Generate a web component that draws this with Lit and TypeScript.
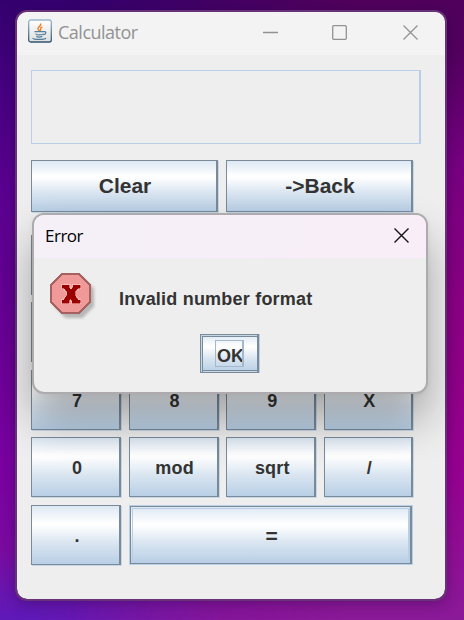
import { LitElement, html, css, svg } from "lit";
import { customElement, property } from "lit/decorators.js";
import { classMap } from "lit/directives/class-map.js";

const closeIcon = svg`<path d="M0.5 0.5L14.5 14.5M14.5 0.5L0.5 14.5" />`;

@customElement("metal-button")
class MetalButton extends LitElement {
  @property() label = "";
  @property() kind = "";

  static styles = css`
    :host { display: block; min-width: 0; }
    button {
      box-sizing: border-box;
      display: flex;
      align-items: center;
      justify-content: center;
      width: 100%;
      height: 100%;
      margin: 0;
      padding: 2px 0 0 3px;
      border: solid #7a8a99;
      border-width: 1px 2px 1px 1px;
      border-radius: 0;
      background: linear-gradient(#dde8f3 0%, #ffffff 30%, #ffffff 33%, #dbe6f1 62%, #b8cfe5 100%);
      box-shadow: 1px 1px 0 #c6d7e8;
      color: #333;
      font: bold 18px/20px "Liberation Sans", Arial, sans-serif;
      letter-spacing: .2px;
    }
    .large { padding: 0 0 0 2px; font-size: 21px; letter-spacing: 0; }
    .primary {
      position: relative;
      font-size: 21px;
      box-shadow: none;
      outline: 1px solid #b8cfe5;
      width: calc(100% - 2px);
      height: calc(100% - 2px);
      margin: 1px 0 0 1px;
    }
    .primary::after {
      content: "";
      position: absolute;
      inset: 1px 0 1px 1px;
      border: solid #b8cfe5;
      border-width: 1px 2px 1px 1px;
    }
    .ok {
      position: relative;
      padding: 5px 0 0 3px;
      letter-spacing: 0;
      box-shadow: inset 1px 1px 0 #c6d7e8, inset 2px 2px 0 #7a8a99, inset 0 -1px 0 #c6d7e8, inset 0 -2px 0 #7a8a99, 1px 0 0 #b8cfe5;
    }
    .ok::after {
      content: "";
      position: absolute;
      inset: 5px 13px 5px 14px;
      border: solid #a3b8cc;
      border-width: 1px 2px 1px 1px;
    }
  `;

  render() {
    return html`<button class=${classMap({ large: this.kind === "large", primary: this.kind === "primary", ok: this.kind === "ok" })}>${this.label}</button>`;
  }
}

@customElement("app-root")
class AppRoot extends LitElement {
  static styles = css`
    :host {
      display: flow-root;
      position: relative;
      width: 464px;
      height: 620px;
      overflow: hidden;
      font-family: "Open Sans", "Noto Sans", sans-serif;
      background:
        radial-gradient(ellipse 210px 75px at 10px 625px, rgba(78, 28, 198, .7), transparent),
        radial-gradient(ellipse 200px 60px at 464px 620px, rgba(130, 40, 165, .8), transparent),
        linear-gradient(90deg, transparent 40%, #8d008c 100%) 0 60px / 100% 560px no-repeat,
        linear-gradient(#34006e, #5a0090 30%, #7a00a0 75%, #7a14a0);
    }
    .backdrop {
      position: absolute;
      inset: 0;
      background: linear-gradient(#50005c 0%, #52005e 8%, #750080 26%, #8c0086 48%, #960090 75%, #8a1a98 100%);
      mask-image: linear-gradient(90deg, transparent 15%, #000 75%);
    }
    .window {
      position: relative;
      box-sizing: border-box;
      width: 432px;
      height: 591px;
      margin: 10px 0 0 15px;
      border: 2px solid #683278;
      border-radius: 12px;
      background: #eee;
      background-clip: padding-box;
      box-shadow: 0 3px 14px rgba(20, 0, 50, .3);
      overflow: hidden;
    }
    .titlebar {
      display: flex;
      align-items: center;
      height: 43px;
      padding: 0 27px 0 11px;
      box-sizing: border-box;
      background: #f3f3f3;
      color: #929292;
    }
    .titlebar svg { display: block; flex: none; fill: none; }
    .titlebar .logo { margin-bottom: 5px; }
    .name { flex: 1; padding: 0 0 3px 6px; font: 18px/24px "Open Sans", sans-serif; letter-spacing: -.5px; }
    .controls { display: flex; gap: 54px; padding-bottom: 2px; stroke: #929292; stroke-width: 1.3; }
    .controls .maximize { margin-right: 2px; }
    .content { padding: 15px 0 0 14px; }
    .display {
      box-sizing: border-box;
      width: 390px;
      height: 74px;
      border: solid #b8cfe5;
      border-width: 1px 2px 1px 1px;
    }
    .actions {
      display: grid;
      grid-template-columns: 187px 187px;
      gap: 8px;
      height: 52px;
      margin-top: 16px;
    }
    .keys {
      display: grid;
      grid-template-columns: 90px 90px 90px 89px;
      grid-template-rows: repeat(5, 60px);
      column-gap: 7.67px;
      row-gap: 7.4px;
      margin-top: 23px;
      width: 382px;
    }
    .equals { grid-column: span 3; }
    .dialog {
      position: absolute;
      left: 32px;
      top: 213px;
      width: 396px;
      height: 181px;
      box-sizing: border-box;
      border: 2px solid #adabad;
      border-radius: 12px;
      background: #eee;
      box-shadow: 0 26px 44px rgba(0, 0, 0, .31), 0 1px 5px rgba(0, 0, 0, .06);
    }
    .dialog-title {
      display: flex;
      align-items: center;
      justify-content: space-between;
      height: 43px;
      padding: 0 17px 0 11px;
      box-sizing: border-box;
      border-radius: 10px 10px 0 0;
      background: linear-gradient(90deg, #f5f0f8, #f6eff7 50%, #f9eef7);
      color: #000;
      font: 17px/24px "Open Sans", sans-serif;
      letter-spacing: -.5px;
    }
    .dialog-title span { padding-bottom: 1px; }
    .dialog-title svg { display: block; margin-bottom: 2px; fill: none; stroke: #111; stroke-width: 1.4; }
    .message {
      display: flex;
      align-items: flex-start;
      height: 48px;
      padding: 14px 0 0 15px;
      gap: 22px;
      color: #333;
      font: bold 18px/24px "Liberation Sans", Arial, sans-serif;
      letter-spacing: .21px;
    }
    .message span { padding-top: 15px; }
    .message svg { display: block; flex: none; }
    .answer { display: flex; justify-content: center; padding: 14px 0 0 0; }
    .answer metal-button { width: 59px; height: 39px; margin-left: -1px; }
  `;

  render() {
    const keys = ["1", "2", "3", "+", "4", "5", "6", "-", "7", "8", "9", "X", "0", "mod", "sqrt", "/", "."];
    return html`
      <div class="backdrop"></div>
      <div class="window">
        <div class="titlebar">
          <svg class="logo" width="24" height="24" viewBox="0 0 24 24">
            <defs>
              <linearGradient id="face" x2="0" y2="1"><stop stop-color="#fff" /><stop offset="1" stop-color="#dedede" /></linearGradient>
              <linearGradient id="rim" x2="0" y2="1"><stop stop-color="#9db9cd" /><stop offset="1" stop-color="#31536f" /></linearGradient>
            </defs>
            <rect x=".7" y="1" width="22.6" height="22" rx="2" fill="url(#face)" stroke="url(#rim)" stroke-width="1.3" />
            <path d="M12.500 4.500C14 7 9 8 10 10c.4 1 1.300 1.200 1.200 2M14.300 8C11 9 13.800 10.200 12 12" stroke="#ee8129" stroke-width="1.4" />
            <path d="M6.500 12.500h9.500M7.500 15c2 .9 6 .9 8 0M8.300 17.400c1.500.7 4.500.7 6 0M15.500 12.700c3.800-1 2.500 3-.3 3M5 19c-1 1.800 11 2 13 .2" stroke="#527f9f" stroke-width="1.250" />
          </svg>
          <span class="name">Calculator</span>
          <div class="controls">
            <svg width="15" height="15"><path d="M0 7.500H15" /></svg>
            <svg class="maximize" width="15" height="15"><rect x=".7" y=".7" width="13.600" height="13.600" rx="1" /></svg>
            <svg width="15" height="15">${closeIcon}</svg>
          </div>
        </div>
        <div class="content">
          <div class="display"></div>
          <div class="actions">
            <metal-button label="Clear" kind="large"></metal-button>
            <metal-button label="->Back" kind="large"></metal-button>
          </div>
          <div class="keys">
            ${keys.map((k) => html`<metal-button label=${k}></metal-button>`)}
            <metal-button class="equals" label="=" kind="primary"></metal-button>
          </div>
        </div>
      </div>
      <div class="dialog">
        <div class="dialog-title"><span>Error</span><svg width="15" height="15">${closeIcon}</svg></div>
        <div class="message">
          <svg width="48" height="50" viewBox="0 0 48 50" shape-rendering="crispEdges">
            <defs><filter id="soft" x="-20%" y="-20%" width="140%" height="140%"><feGaussianBlur stdDeviation="1.600" /></filter></defs>
            <path d="M16 5H33L45 17V34L33 46H16L5 34V17Z" fill="#999" opacity=".65" filter="url(#soft)" />
            <path d="M13 2H30L41 13V30L30 41H13L2 30V13Z" fill="#ef9999" stroke="#a66060" stroke-width="1.700" />
            <path d="M12 12H22V14H23V12H32V17H30L27 21V23L30 27H32V32H22V30H21V32H12V27H14L17 23V21L14 17H12Z" fill="#ffb8b8" />
            <path d="M13 13H20V15L22 18L24 15V13H31V16H29L26 20V23L29 28H31V31H23V29L22 26L20 29V31H13V28H15L18 23V20L15 16H13Z" fill="#990000" stroke="#990000" stroke-width=".4" />
          </svg>
          <span>Invalid number format</span>
        </div>
        <div class="answer"><metal-button label="OK" kind="ok"></metal-button></div>
      </div>
    `;
  }
}
